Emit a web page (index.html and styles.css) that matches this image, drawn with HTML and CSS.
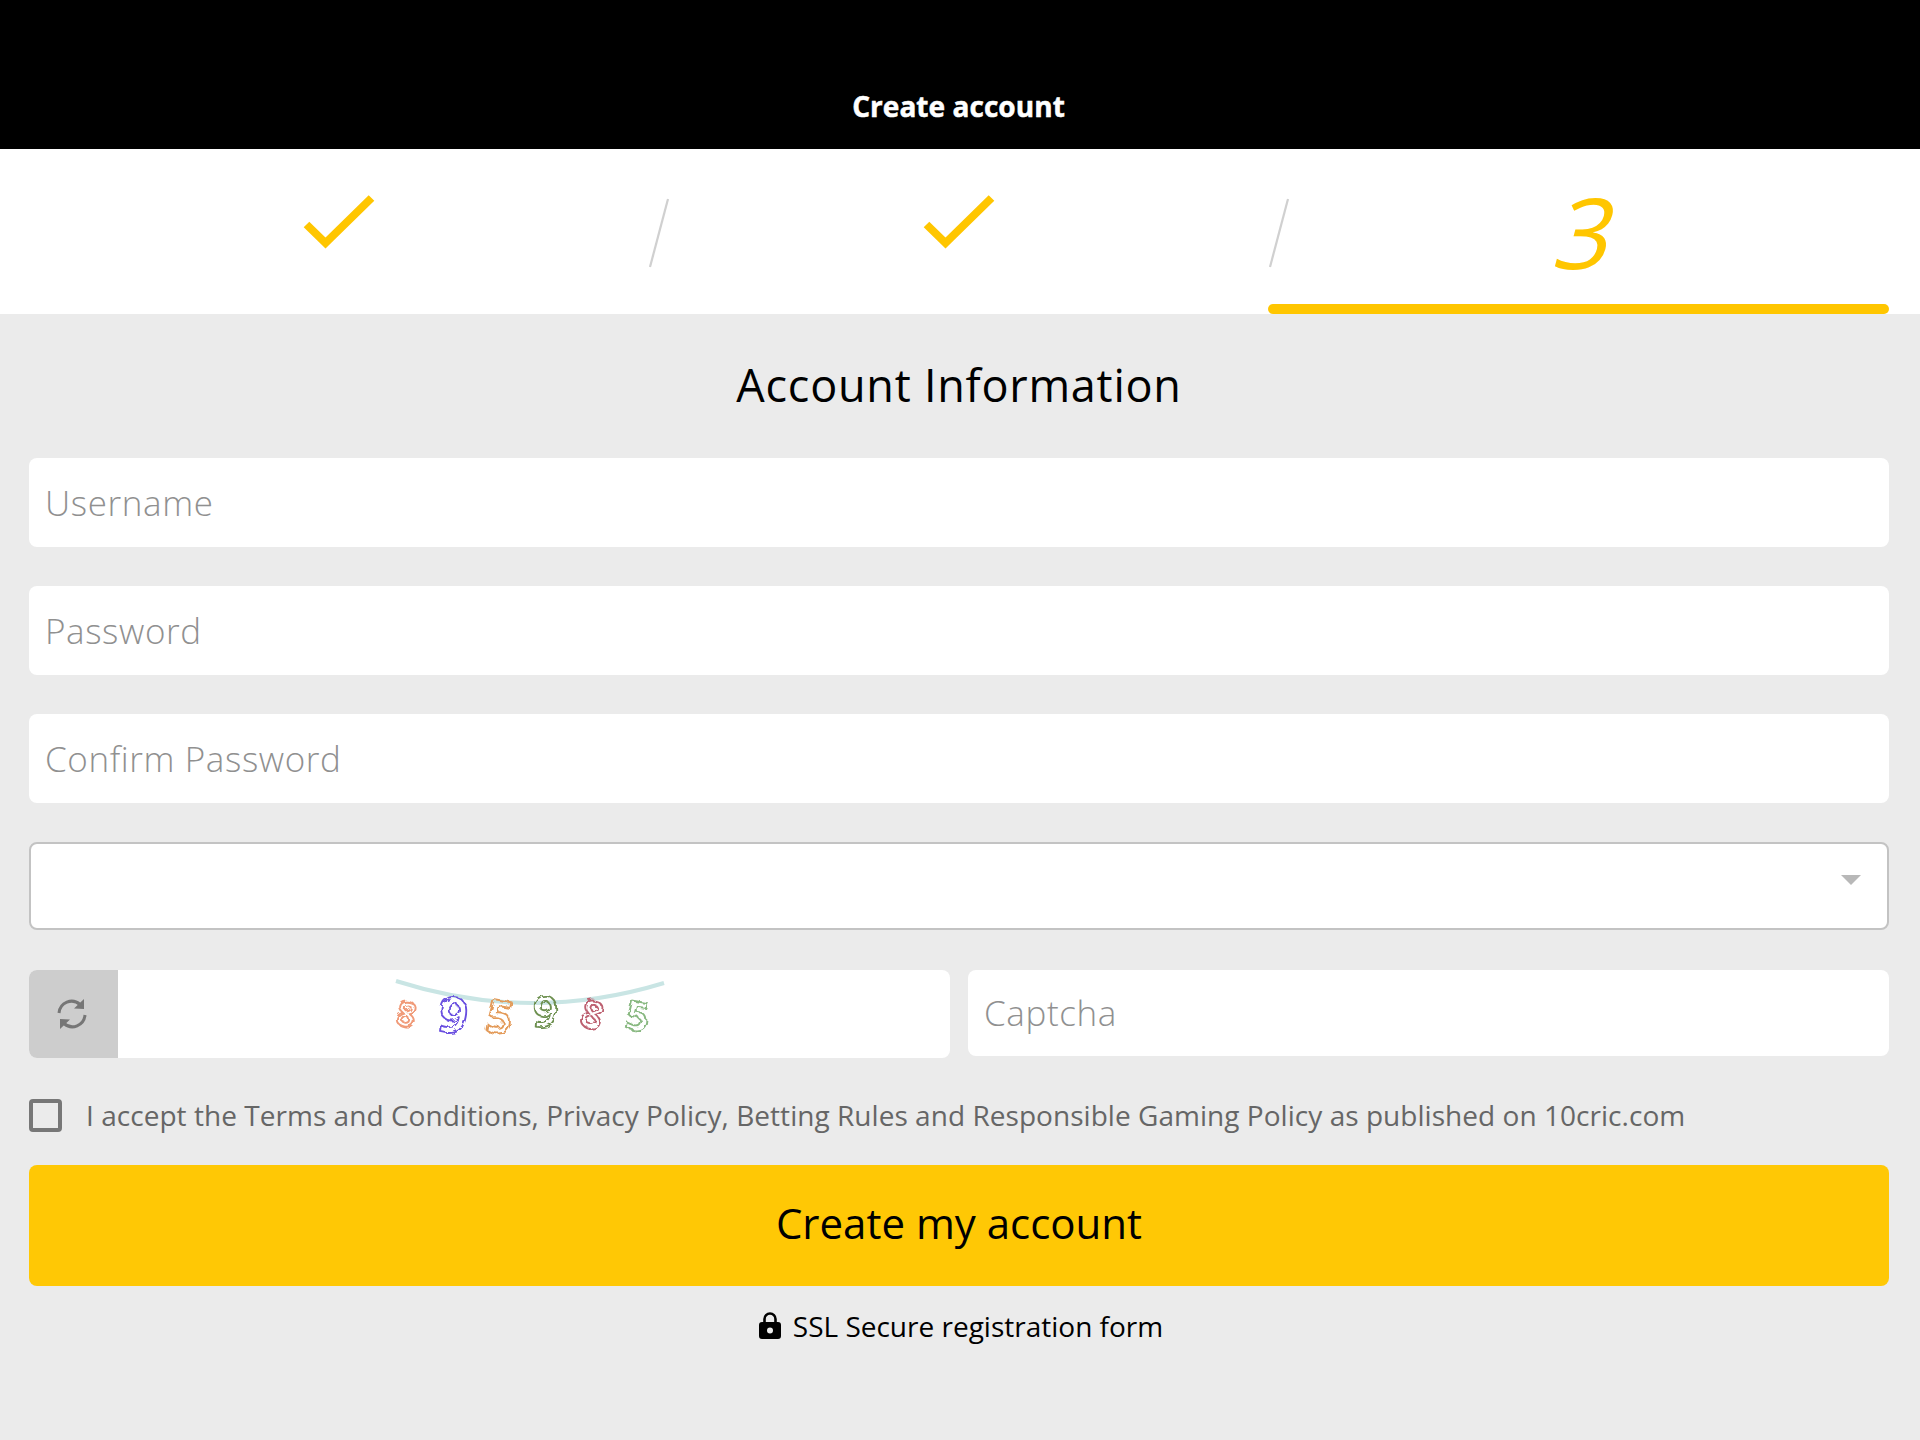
FILE: index.html
```html
<!DOCTYPE html>
<html lang="en">
<head>
<meta charset="utf-8">
<title>Create account</title>
<link rel="stylesheet" href="styles.css">
</head>
<body>
<header class="topbar"><h1 class="topbar-title">Create account</h1></header>
<nav class="steps">
  <div class="step">
    <svg class="check" width="72" height="56" viewBox="0 0 72 56"><path d="M3.5 29.5 22.5 48 68.5 3" fill="none" stroke="#ffc600" stroke-width="8"/></svg>
  </div>
  <div class="step">
    <svg class="slash" width="22" height="72" viewBox="0 0 22 72"><path d="M20 2 2 70" stroke="#d0d0d0" stroke-width="2.2"/></svg>
    <svg class="check" width="72" height="56" viewBox="0 0 72 56"><path d="M3.5 29.5 22.5 48 68.5 3" fill="none" stroke="#ffc600" stroke-width="8"/></svg>
  </div>
  <div class="step step-current">
    <svg class="slash" width="22" height="72" viewBox="0 0 22 72"><path d="M20 2 2 70" stroke="#d0d0d0" stroke-width="2.2"/></svg>
    <span class="step-number">3</span>
  </div>
</nav>
<form class="form">
  <h2 class="form-title">Account Information</h2>
  <div class="field"><span>Username</span></div>
  <div class="field"><span>Password</span></div>
  <div class="field"><span>Confirm Password</span></div>
  <div class="field select"><svg width="20" height="10" viewBox="0 0 20 10"><path d="M0 0H20L10 10Z" fill="#b8b8b8"/></svg></div>
  <div class="captcha-row">
    <div class="captcha">
      <div class="refresh">
        <svg width="30" height="32" viewBox="0 0 30 32"><g fill="none" stroke="#767676" stroke-width="3"><path d="M2 15C3 4.500 15-.5 23 6.500"/><path d="M28 17C27 27.500 15 32.500 7 25.500"/></g><path d="M27 1V11L17 10.500ZM3 31V21L13 21.500Z" fill="#767676"/></svg>
      </div>
      <svg class="captcha-image" width="290" height="72" viewBox="390 972 290 72">
        <defs><filter id="rough" x="-10%" y="-10%" width="120%" height="120%"><feTurbulence type="fractalNoise" baseFrequency=".15" numOctaves="2" seed="4"/><feDisplacementMap in="SourceGraphic" scale="6"/></filter></defs>
        <path d="M396 981Q530 1024 664 983" fill="none" stroke="#c9e5e4" stroke-width="4"/>
        <g class="digits" filter="url(#rough)">
          <text x="397" y="1026" font-size="34" stroke="#f09a78" transform="rotate(12 405 1013)">8</text>
          <text x="439" y="1033" font-size="50" stroke="#6a50e0" transform="rotate(7 453 1015)">9</text>
          <text x="487" y="1033" font-size="46" stroke="#e39a58" transform="rotate(10 498 1015)">5</text>
          <text x="533" y="1027" font-size="43" stroke="#6d9050" transform="rotate(3 545 1012)">9</text>
          <text x="581" y="1028" font-size="38" stroke="#bd6070" transform="rotate(14 592 1015)">8</text>
          <text x="626" y="1030" font-size="40" stroke="#88b880" transform="rotate(10 637 1016)">5</text>
        </g>
      </svg>
    </div>
    <div class="field captcha-input"><span>Captcha</span></div>
  </div>
  <div class="terms"><i class="checkbox"></i><span>I accept the Terms and Conditions, Privacy Policy, Betting Rules and Responsible Gaming Policy as published on 10cric.com</span></div>
  <button class="submit" type="button">Create my account</button>
  <div class="secure"><svg width="22" height="28" viewBox="0 0 22 28"><path d="M5.500 11V7A5.500 5.500 0 0 1 16.500 7V11" fill="none" stroke="#000" stroke-width="2.600"/><path fill-rule="evenodd" d="M3 10H19Q22 10 22 13V24Q22 27 19 27H3Q0 27 0 24V13Q0 10 3 10ZM11 15.500A3 3 0 1 0 11 21.500A3 3 0 1 0 11 15.500Z"/></svg><span>SSL Secure registration form</span></div>
</form>
</body>
</html>
```
FILE: styles.css
```css
* { box-sizing: border-box; }
body {
  margin: 0;
  height: 1440px;
  background: #ebebeb;
  color: #000;
  font-family: "Open Sans", "Noto Sans", sans-serif;
  overflow: hidden;
}
svg { display: block; flex: none; }
span { white-space: nowrap; }
.topbar {
  height: 149px;
  padding: 87px 3px 0 0;
  background: #000;
  color: #fff;
  text-align: center;
}
.topbar-title {
  margin: 0;
  font-size: 28px;
  line-height: 38px;
  font-weight: 700;
  letter-spacing: .05px;
  -webkit-text-stroke: .5px #fff;
}
.steps {
  display: grid;
  grid-template-columns: repeat(3, 1fr);
  height: 165px;
  padding: 0 31px 0 27px;
  background: #fff;
}
.step {
  display: grid;
  grid-template-columns: 22px 1fr 22px;
  grid-template-rows: 1fr auto;
  align-items: start;
  justify-items: center;
  padding-top: 46px;
}
.check { grid-column: 2; margin-left: 3px; }
.slash { grid-column: 1; grid-row: 1; margin-top: 2px; }
.step-current::after {
  content: "";
  grid-column: 1 / -1;
  grid-row: 2;
  width: 100%;
  height: 10px;
  border-radius: 5px;
  background: #ffc600;
}
.step-number {
  grid-column: 2;
  margin-left: 19px;
  color: #ffc600;
  font-size: 98px;
  line-height: 72px;
  transform: skewX(-15deg);
}
.form { padding: 41px 31px 0 29px; }
.form-title {
  margin: 0 0 43px;
  text-align: center;
  font-size: 45px;
  line-height: 60px;
  font-weight: 400;
  letter-spacing: .75px;
}
.field {
  display: flex;
  align-items: center;
  height: 89px;
  margin-bottom: 39px;
  padding: 0 16px;
  border-radius: 8px;
  background: #fff;
  color: #909090;
  font-size: 35px;
  font-weight: 300;
  letter-spacing: .6px;
}
.select {
  align-items: flex-start;
  justify-content: flex-end;
  height: 88px;
  margin-bottom: 40px;
  padding: 31px 26px 0;
  border: 2px solid #c3c3c3;
}
.captcha-row { display: grid; grid-template-columns: 1fr 1fr; gap: 18px; height: 88px; }
.captcha { display: flex; border-radius: 8px; background: #fff; overflow: hidden; }
.refresh { display: grid; place-items: center; width: 89px; padding-right: 4px; background: #cdcdcd; }
.captcha-image { margin: 2px 0 0 272px; }
.digits { fill: none; stroke-width: 1.9; font-family: "Open Sans", sans-serif; font-weight: 700; }
.captcha-input { height: 86px; margin: 0; padding-bottom: 2px; }
.terms {
  display: flex;
  align-items: center;
  gap: 24px;
  height: 107px;
  padding-top: 8px;
  color: #666;
  font-size: 28px;
  letter-spacing: .04px;
}
.terms span { margin-top: -2px; }
.checkbox { flex: none; width: 33px; height: 33px; border: 4px solid #777; border-radius: 4px; }
.submit {
  display: block;
  width: 100%;
  height: 121px;
  padding: 0 0 5px;
  border: 0;
  border-radius: 8px;
  background: #ffc805;
  color: #000;
  font: 400 42px/116px "Open Sans", sans-serif;
}
.secure {
  display: flex;
  align-items: center;
  justify-content: center;
  gap: 12px;
  height: 80px;
  padding-left: 4px;
  font-size: 28px;
}
```
